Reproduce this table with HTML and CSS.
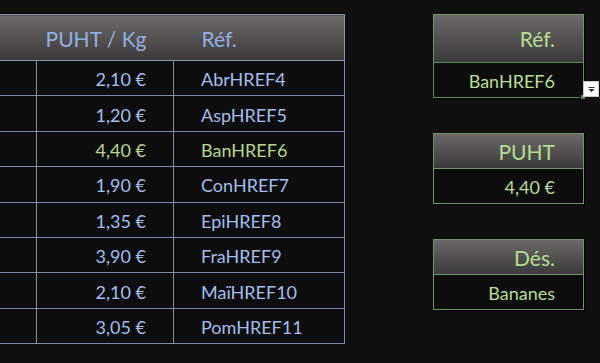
FILE: index.html
```html
<!DOCTYPE html>
<html lang="fr">
<head>
<meta charset="utf-8">
<title>Recherche référence</title>
<link rel="stylesheet" href="styles.css">
</head>
<body>
<div class="sheet">
  <div class="table-wrap">
    <table class="prices">
      <colgroup>
        <col class="c-hidden">
        <col class="c-price">
        <col class="c-ref">
      </colgroup>
      <thead>
        <tr>
          <th class="th-hidden"></th>
          <th class="th-price">PUHT / Kg</th>
          <th class="th-ref">Réf.</th>
        </tr>
      </thead>
      <tbody>
        <tr><td></td><td class="num">2,10 €</td><td class="ref">AbrHREF4</td></tr>
        <tr><td></td><td class="num">1,20 €</td><td class="ref">AspHREF5</td></tr>
        <tr class="hit"><td></td><td class="num">4,40 €</td><td class="ref">BanHREF6</td></tr>
        <tr><td></td><td class="num">1,90 €</td><td class="ref">ConHREF7</td></tr>
        <tr><td></td><td class="num">1,35 €</td><td class="ref">EpiHREF8</td></tr>
        <tr><td></td><td class="num">3,90 €</td><td class="ref">FraHREF9</td></tr>
        <tr><td></td><td class="num">2,10 €</td><td class="ref">MaïHREF10</td></tr>
        <tr><td></td><td class="num">3,05 €</td><td class="ref">PomHREF11</td></tr>
      </tbody>
    </table>
  </div>

  <div class="panel">
    <div class="box box-first">
      <div class="box-head tall">Réf.</div>
      <div class="box-val selected">BanHREF6
        <span class="handle"></span>
        <span class="dropdown"><svg width="7" height="5" viewBox="0 0 7 5"><rect x="0.5" y="0" width="6" height="1" fill="#333"/><path d="M0.5 2 L6.5 2 L3.5 5 Z" fill="#222"/></svg></span>
      </div>
    </div>
    <div class="box">
      <div class="box-head">PUHT</div>
      <div class="box-val">4,40 €</div>
    </div>
    <div class="box">
      <div class="box-head">Dés.</div>
      <div class="box-val">Bananes</div>
    </div>
  </div>
</div>
</body>
</html>
```

FILE: styles.css
```css
html, body {
  margin: 0;
  padding: 0;
  background: #0f0f0f;
  overflow: hidden;
}

body {
  width: 600px;
  height: 363px;
  font-family: Lato, "Open Sans", sans-serif;
}

.sheet {
  display: flex;
  align-items: flex-start;
  padding-top: 14px;
}

.table-wrap {
  margin-left: -60px;
  box-shadow: 0 -1px 0 #000;
}

.prices {
  border-collapse: collapse;
  table-layout: fixed;
  width: 404px;
}

.c-hidden { width: 96px; }
.c-price { width: 137px; }
.c-ref { width: 171px; }

.prices th {
  height: 46px;
  padding: 2px 0 0 0;
  font-weight: 400;
  font-size: 21px;
  color: #8fb0e6;
  background: linear-gradient(#6d6a67, #3b3937);
  border-top: 1px solid #8795b5;
  border-bottom: 1px solid #8795b5;
  box-sizing: border-box;
}

.prices th.th-ref {
  border-right: 1px solid #8795b5;
  text-align: left;
  padding-left: 28px;
}

.prices th.th-price {
  text-align: right;
  padding-right: 27px;
}

.prices td {
  height: 35.4px;
  padding: 2px 0 0 0;
  font-size: 18px;
  color: #a2bef0;
  border: 1px solid #7d8cad;
  background: #0d0d0d;
  box-sizing: border-box;
}

.prices td.num {
  text-align: right;
  padding-right: 27px;
}

.prices td.ref {
  text-align: left;
  padding-left: 27px;
}

.prices tr.hit td {
  color: #b6d88e;
}

.panel {
  margin-left: 88px;
  width: 151px;
  display: flex;
  flex-direction: column;
  gap: 35px;
}

.box {
  border: 1px solid #6f9667;
  box-shadow: 1px 1px 0 #000;
}

.box-head {
  height: 35px;
  box-sizing: border-box;
  padding: 0 28px 0 0;
  display: flex;
  align-items: center;
  justify-content: flex-end;
  font-size: 21px;
  color: #b5dd92;
  background: linear-gradient(#6b6968, #3b3a3a);
  border-bottom: 1px solid #6f9667;
}

.box-head.tall {
  height: 48px;
  padding-top: 0;
}

.box-val {
  height: 34px;
  box-sizing: border-box;
  padding: 1px 28px 0 0;
  display: flex;
  align-items: center;
  justify-content: flex-end;
  font-size: 18px;
  color: #b8de96;
  background: #0d0d0d;
  position: relative;
}

.box-val.selected {
  outline: 1px solid #5e8a5a;
}

.handle {
  position: absolute;
  right: -3px;
  bottom: -3px;
  width: 4px;
  height: 4px;
  background: #5e8a5a;
  border: 1px solid #0d0d0d;
}

.dropdown {
  position: absolute;
  left: 149px;
  bottom: 0;
  width: 16px;
  height: 16px;
  background: #fff;
  border: 1px solid #c8c8c8;
  box-sizing: border-box;
  display: flex;
  align-items: center;
  justify-content: center;
}
```
